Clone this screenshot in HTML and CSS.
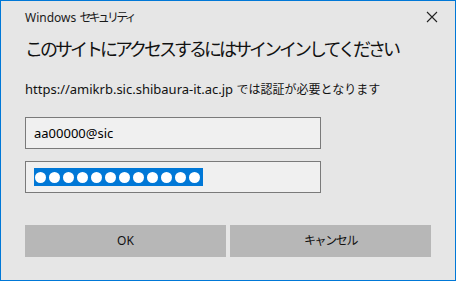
FILE: index.html
```html
<!DOCTYPE html>
<html lang="ja">
<head>
    <meta charset="UTF-8">
    <meta name="viewport" content="width=device-width, initial-scale=1.0">
    <title>Windows セキュリティ</title>
    <link rel="stylesheet" href="styles.css">
</head>
<body>
    <div class="dialog">
        <div class="titlebar">
            <span class="title">Windows <span class="ja">セキュリティ</span></span>
            <svg class="close" width="12" height="12" viewBox="0 0 12 12">
                <path d="M1 1 L11 11 M11 1 L1 11" stroke="#222" stroke-width="1.1" fill="none"/>
            </svg>
        </div>
        <h1 class="heading">このサイトにアクセスするにはサインインしてください</h1>
        <p class="message">https://amikrb.sic.shibaura-it.ac.jp <span class="ja">では認証が必要となります</span></p>
        <div class="field">aa00000@sic</div>
        <div class="field">
            <span class="selection">
                <span class="dot"></span><span class="dot"></span><span class="dot"></span>
                <span class="dot"></span><span class="dot"></span><span class="dot"></span>
                <span class="dot"></span><span class="dot"></span><span class="dot"></span>
                <span class="dot"></span><span class="dot"></span><span class="dot"></span>
            </span>
        </div>
        <div class="buttons">
            <div class="button">OK</div>
            <div class="button cancel">キャンセル</div>
        </div>
    </div>
</body>
</html>
```

FILE: styles.css
```css
body {
    margin: 0;
    font-family: "Noto Sans", "Noto Sans CJK JP", sans-serif;
    color: #000;
}
.dialog {
    box-sizing: border-box;
    width: 456px;
    height: 281px;
    border: 1px solid #0078d7;
    background: #e6e6e6;
    padding: 0 24px;
}
.titlebar {
    display: flex;
    justify-content: space-between;
    align-items: center;
    height: 31px;
}
.title {
    font-size: 12px;
    color: #1a1a1a;
}
.title .ja {
    letter-spacing: -2.8px;
}
.close {
    margin-right: -7px;
}
.heading {
    margin: 3px 0 0;
    font-size: 18px;
    font-weight: normal;
    line-height: 28px;
    letter-spacing: -3px;
    color: #111;
    white-space: nowrap;
}
.message {
    margin: 16px 0 0;
    font-size: 13px;
    line-height: 20px;
    color: #111;
    white-space: nowrap;
}
.message .ja {
    font-size: 12px;
}
.field {
    box-sizing: border-box;
    display: flex;
    align-items: center;
    width: 296px;
    height: 32px;
    margin-top: 17px;
    padding-left: 8px;
    border: 1px solid #7a7a7a;
    background: #f0f0f0;
    font-size: 13px;
}
.field + .field {
    margin-top: 12px;
}
.selection {
    display: flex;
    align-items: center;
    gap: 3px;
    height: 18px;
    padding: 0 3px 0 1px;
    background: #0078d7;
}
.dot {
    width: 11px;
    height: 11px;
    border-radius: 50%;
    background: #fff;
}
.buttons {
    display: flex;
    gap: 4px;
    margin-top: 32px;
}
.button {
    flex: 1;
    height: 32px;
    line-height: 32px;
    text-align: center;
    background: #b7b7b7;
    font-size: 12px;
    color: #111;
}
.cancel {
    letter-spacing: -1.4px;
}
```
